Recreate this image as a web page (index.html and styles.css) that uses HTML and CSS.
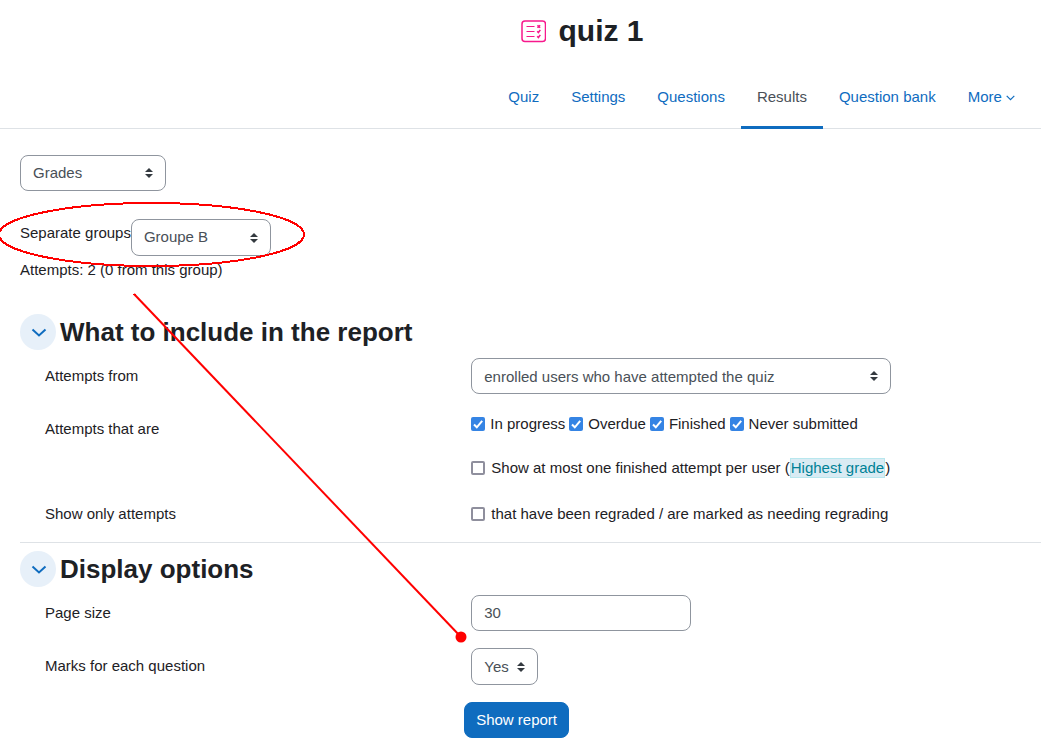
FILE: index.html
```html
<!DOCTYPE html>
<html lang="en">
<head>
   <meta charset="utf-8" />
   <meta name="viewport" content="width=device-width, initial-scale=1" />
   <title>quiz 1</title>
   <link rel="stylesheet" href="styles.css">
</head>
<body>
   <header class="page-header">
      <svg class="quiz-icon" width="25" height="24" viewBox="0 0 25 24" fill="none" stroke="#f7188c">
         <rect x="1" y="2" width="23.500" height="20.500" rx="3" stroke-width="1.500" />
         <path d="M5.500 7.500h8M5.500 12.500h8M5.500 17.500h8" stroke-width="1.200" />
         <path d="M16.500 6.200l2.600 2.600M19.100 6.200l-2.600 2.600M16.200 12.300l1.200 1.200 1.900-2.600M16.200 17.300l1.200 1.200 1.900-2.600" stroke-width="1.600" />
      </svg>
      <h1>quiz 1</h1>
   </header>

   <nav class="tabs">
      <a href="#">Quiz</a>
      <a href="#">Settings</a>
      <a href="#">Questions</a>
      <a href="#" class="active">Results</a>
      <a href="#">Question bank</a>
      <a href="#">More <svg width="9" height="6" viewBox="0 0 9 6" fill="none" stroke="currentColor" stroke-width="1.200"><path d="M0.700 0.800l3.800 3.800 3.800-3.800" /></svg></a>
   </nav>

   <main>
      <select class="report-type" aria-label="Report">
         <option>Grades</option>
      </select>

      <div class="groups">
         <label for="group">Separate groups</label>
         <select id="group">
            <option>Groupe B</option>
         </select>
      </div>
      <div class="attempts">Attempts: 2 (0 from this group)</div>

      <form>
         <section>
            <div class="section-title">
               <button type="button" class="toggle" aria-label="Collapse">
                  <svg width="16" height="10" viewBox="0 0 16 10" fill="none" stroke="#0f6cbf" stroke-width="2"><path d="M1.500 1.500l6.500 6 6.500-6" /></svg>
               </button>
               <h2>What to include in the report</h2>
            </div>
            <div class="rows">
               <div class="row">
                  <label for="from">Attempts from</label>
                  <div>
                     <select id="from" class="from">
                        <option>enrolled users who have attempted the quiz</option>
                     </select>
                  </div>
               </div>
               <div class="row">
                  <span>Attempts that are</span>
                  <div class="checks">
                     <div class="states">
                        <label><input type="checkbox" checked />In progress</label>
                        <label><input type="checkbox" checked />Overdue</label>
                        <label><input type="checkbox" checked />Finished</label>
                        <label><input type="checkbox" checked />Never submitted</label>
                     </div>
                     <label class="single"><input type="checkbox" /><span>Show at most one finished attempt per user (<mark>Highest grade</mark>)</span></label>
                  </div>
               </div>
               <div class="row short">
                  <span>Show only attempts</span>
                  <label class="single"><input type="checkbox" />that have been regraded / are marked as needing regrading</label>
               </div>
            </div>
         </section>

         <section>
            <div class="section-title">
               <button type="button" class="toggle" aria-label="Collapse">
                  <svg width="16" height="10" viewBox="0 0 16 10" fill="none" stroke="#0f6cbf" stroke-width="2"><path d="M1.500 1.500l6.500 6 6.500-6" /></svg>
               </button>
               <h2>Display options</h2>
            </div>
            <div class="rows">
               <div class="row">
                  <label for="pagesize">Page size</label>
                  <div><input id="pagesize" class="page-size" type="text" value="30" /></div>
               </div>
               <div class="row">
                  <label for="marks">Marks for each question</label>
                  <div>
                     <select id="marks" class="marks">
                        <option>Yes</option>
                     </select>
                  </div>
               </div>
            </div>
         </section>

         <div class="actions">
            <button type="submit" class="submit">Show report</button>
         </div>
      </form>
   </main>

   <!-- red callout drawn over the form -->
   <svg class="callout" width="480" height="650" viewBox="0 0 480 650" fill="none" stroke="#f00" stroke-width="2">
      <ellipse cx="151.500" cy="234.500" rx="152.500" ry="31.500" shape-rendering="crispEdges" />
      <path d="M134 294L461 637" />
      <path d="M133 294.500h3" stroke-width="1" />
      <circle cx="461" cy="637" r="5.500" fill="#f00" stroke="none" />
   </svg>
</body>
</html>
```

FILE: styles.css
```css
* { box-sizing: border-box; }

body { margin: 0; position: relative; font-family: "Liberation Sans", Arial, sans-serif; font-size: 15px; line-height: 22px; color: #1d2125; background: #fff; }

h1, h2 { margin: 0; font-weight: bold; }
h1 { font-size: 30px; line-height: 36px; }
h2 { font-size: 26px; line-height: 36px; }

.page-header { display: flex; align-items: center; gap: 13px; height: 66px; padding-bottom: 4px; padding-left: 50%; }
.quiz-icon { flex: none; }

.tabs { display: flex; justify-content: flex-end; height: 63px; padding-right: 10px; border-bottom: 1px solid #dee2e6; }
.tabs a { height: 63px; padding: 0 16px; line-height: 62px; color: #0f6cbf; text-decoration: none; white-space: nowrap; }
.tabs a.active { color: #495057; border-bottom: 3px solid #0f6cbf; }
.tabs svg { vertical-align: middle; }

main { padding: 26px 0 4px 20px; }

select, .page-size { display: block; height: 36px; padding: 0 12px; border: 1px solid #8f959e; border-radius: 8px; background: #fff; color: #495057; font: inherit; }
select { appearance: none; padding-bottom: 1px; background: #fff url("data:image/svg+xml,%3csvg xmlns='http://www.w3.org/2000/svg' viewBox='0 0 4 5'%3e%3cpath fill='%23343a40' d='M2 0L0 2h4zm0 5L0 3h4z'/%3e%3c/svg%3e") no-repeat right 12px center / 8px 10px; }
.report-type { width: 146px; }

.groups { display: flex; margin-top: 28px; }
.groups label { line-height: 28px; }
.groups select { width: 140px; height: 37px; padding-bottom: 2px; }
.attempts { margin-top: 3px; }

form { margin-top: 33px; }
section { padding-bottom: 12px; }
section + section { padding: 8px 0 0; border-top: 1px solid #dee2e6; }

.section-title { display: flex; align-items: center; gap: 4px; }
.toggle { display: flex; align-items: center; justify-content: center; width: 36px; height: 36px; padding: 2px 0 0 2px; border: none; border-radius: 50%; background: #e7f0f9; cursor: pointer; }

.rows { display: grid; gap: 17px; padding: 8px 0 0 25px; }
.row { display: grid; grid-template-columns: 42.8% 1fr; line-height: 36px; }
.row.short { line-height: 32px; }
.from { width: 420px; max-width: 100%; }
.page-size { width: 220px; }
.marks { width: 67px; height: 37px; padding-bottom: 2px; }

.checks { display: grid; gap: 18px; line-height: 26px; }
.states { display: flex; flex-wrap: wrap; gap: 4px; }
.states label { display: flex; align-items: center; gap: 5px; }
.single { display: flex; align-items: center; gap: 6px; }

input[type=checkbox] { appearance: none; flex: none; width: 14px; height: 14px; margin: 0; border: 2px solid #8f8f9d; border-radius: 2px; background: #fff; }
input[type=checkbox]:checked { border: none; background: #3584e4 url("data:image/svg+xml,%3csvg xmlns='http://www.w3.org/2000/svg' viewBox='0 0 14 14'%3e%3cpath fill='none' stroke='%23fff' stroke-width='2' d='M3 7.500l2.800 2.800L11.200 3.800'/%3e%3c/svg%3e"); }

mark { padding: 0 0 1px; border: 1px solid #b8e7ee; background: #d9ebf3; color: #008196; }

.actions { margin-top: 17px; padding-left: 43.5%; }
.submit { height: 36px; padding: 0 11px; border: 1px solid #0f6cbf; border-radius: 8px; background: #0f6cbf; color: #fff; font: inherit; cursor: pointer; }

.callout { position: absolute; top: 0; left: 0; pointer-events: none; }
```
